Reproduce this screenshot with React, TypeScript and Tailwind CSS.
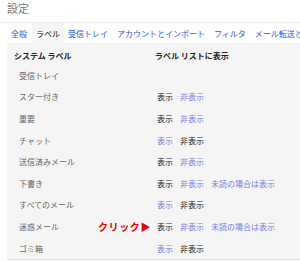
const font = { fontFamily: '"Noto Sans CJK JP", "Noto Sans", sans-serif' };

type Opt = { text: string; active?: boolean };

const rows: { name: string; opts: Opt[]; click?: boolean }[] = [
  { name: "受信トレイ", opts: [] },
  { name: "スター付き", opts: [{ text: "表示", active: true }, { text: "非表示" }] },
  { name: "重要", opts: [{ text: "表示", active: true }, { text: "非表示" }] },
  { name: "チャット", opts: [{ text: "表示" }, { text: "非表示", active: true }] },
  { name: "送信済みメール", opts: [{ text: "表示", active: true }, { text: "非表示" }] },
  { name: "下書き", opts: [{ text: "表示", active: true }, { text: "非表示" }, { text: "未読の場合は表示" }] },
  { name: "すべてのメール", opts: [{ text: "表示" }, { text: "非表示", active: true }] },
  { name: "迷惑メール", opts: [{ text: "表示", active: true }, { text: "非表示" }, { text: "未読の場合は表示" }], click: true },
  { name: "ゴミ箱", opts: [{ text: "表示" }, { text: "非表示", active: true }] },
];

const tabs = ["全般", "ラベル", "受信トレイ", "アカウントとインポート", "フィルタ", "メール転送と"];

export default function App() {
  return (
    <div className="w-[300px] h-[261px] bg-white overflow-hidden text-[8px] leading-none" style={font}>
      <div className="h-[23px] border-b border-[#ececec] pl-[7px] pt-[3px] text-[11px] text-[#777]">設定</div>
      <div className="flex items-end h-[20px] pl-[7px] whitespace-nowrap">
        {tabs.map((t) => (
          <span
            key={t}
            className={
              t === "ラベル"
                ? "h-[20px] px-[4px] pt-[1px] flex items-center bg-[#f5f5f5] text-[#222]"
                : "h-[20px] px-[4px] pt-[1px] flex items-center text-[#3656cf] mr-[1px]"
            }
          >
            {t}
          </span>
        ))}
      </div>
      <div className="ml-[7px] bg-[#f5f5f5] h-[217px] border-b border-[#e2e2e2]">
        <div className="flex h-[22px] pt-[3px] items-center font-bold text-[#222]">
          <span className="w-[148px] pl-[7px]">システム ラベル</span>
          <span>ラベル リストに表示</span>
        </div>
        {rows.map((r) => (
          <div key={r.name} className="flex h-[21.6px] items-center whitespace-nowrap">
            <span className="w-[91px] pl-[12px] text-[#666]">{r.name}</span>
            <span className="w-[59px] text-[10px] font-bold text-[#e00000] tracking-[0.6px]">
              {r.click ? "クリック▶" : ""}
            </span>
            <div className="flex gap-[7px]">
              {r.opts.map((o) => (
                <span key={o.text} className={o.active ? "text-[#222]" : "text-[#6f80e0]"}>
                  {o.text}
                </span>
              ))}
            </div>
          </div>
        ))}
      </div>
    </div>
  );
}
